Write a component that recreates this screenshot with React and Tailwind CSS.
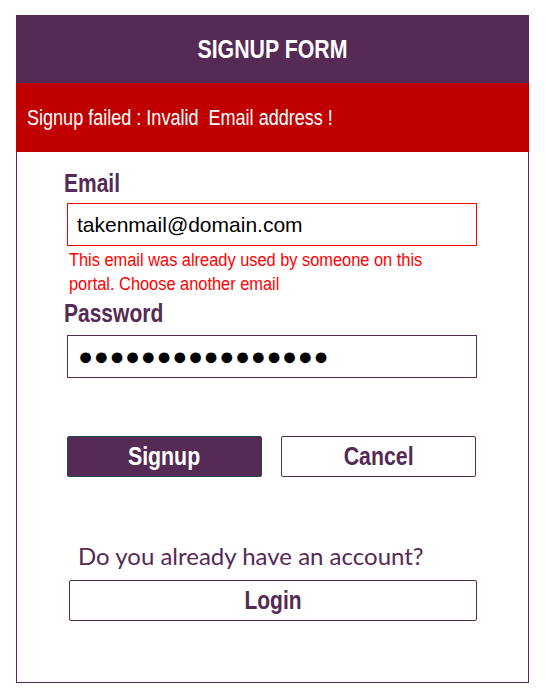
import React, { useState } from 'react';

const sans = "font-['Liberation_Sans',Arial,sans-serif]";

export default function App() {
    const [email, setEmail] = useState('takenmail@domain.com');
    const [password] = useState('abcdefghijklmnop');

    return (
        <div className={`w-[546px] h-[695px] bg-white pt-[15px] pl-[16px] ${sans}`}>
            <div className="w-[513px] h-[668px] border border-[#552a55] border-t-0 flex flex-col">
                {/* Header */}
                <div className="h-[68px] -mx-px bg-[#552a55] flex items-center justify-center text-white font-bold text-[26px]">
                    <span className="inline-block scale-x-[0.82]">SIGNUP FORM</span>
                </div>

                {/* Error banner */}
                <div className="h-[69px] -mx-px bg-[#c00000] flex items-center pl-[11px] text-white text-[22px]">
                    <span className="inline-block origin-left scale-x-[0.82] whitespace-pre">Signup failed : Invalid  Email address !</span>
                </div>

                <form className="px-[50px] flex flex-col" onSubmit={(e) => e.preventDefault()}>
                    <label className="mt-[16px] -ml-[3px] text-[#552a55] font-bold text-[25px] leading-[30px]">
                        <span className="inline-block origin-left scale-x-[0.84]">Email</span>
                    </label>
                    <input
                        type="text"
                        value={email}
                        onChange={(e) => setEmail(e.target.value)}
                        className="mt-[5px] w-[410px] h-[43px] border border-[#ff0000] px-[9px] text-[21px] text-black outline-none"
                    />
                    <p className="mt-[2px] ml-[2px] w-[395px] origin-left scale-x-[0.91] text-[#ff0000] text-[18px] leading-[24px]">
                        This email was already used by someone on this portal. Choose another email
                    </p>

                    <label className="mt-[2px] -ml-[3px] text-[#552a55] font-bold text-[25px] leading-[30px]">
                        <span className="inline-block origin-left scale-x-[0.84]">Password</span>
                    </label>
                    <input
                        type="text"
                        readOnly
                        aria-label="Password"
                        value={'\u25CF'.repeat(password.length)}
                        className="mt-[7px] w-[410px] h-[43px] border border-[#552a55] px-[10px] text-[25px] tracking-[0.6px] text-black outline-none"
                    />

                    <div className="mt-[58px] flex gap-[19px]">
                        <button
                            type="submit"
                            className="w-[195px] h-[41px] bg-[#552a55] border border-[#1f4a45] rounded-[2px] text-white font-bold text-[26px]"
                        >
                            <span className="inline-block scale-x-[0.82]">Signup</span>
                        </button>
                        <button
                            type="button"
                            className="w-[195px] h-[41px] bg-white border border-[#552a55] rounded-[2px] text-[#552a55] font-bold text-[26px]"
                        >
                            <span className="inline-block scale-x-[0.82]">Cancel</span>
                        </button>
                    </div>

                    <p className="mt-[64px] ml-[11px] text-[#552a55] text-[24px] leading-[30px] font-['Lato',sans-serif]">
                        Do you already have an account?
                    </p>
                    <button
                        type="button"
                        className="mt-[9px] ml-[2px] w-[408px] h-[41px] bg-white border border-[#552a55] rounded-[2px] text-[#552a55] font-bold text-[25px]"
                    >
                        <span className="inline-block scale-x-[0.84]">Login</span>
                    </button>
                </form>
            </div>
        </div>
    );
}
